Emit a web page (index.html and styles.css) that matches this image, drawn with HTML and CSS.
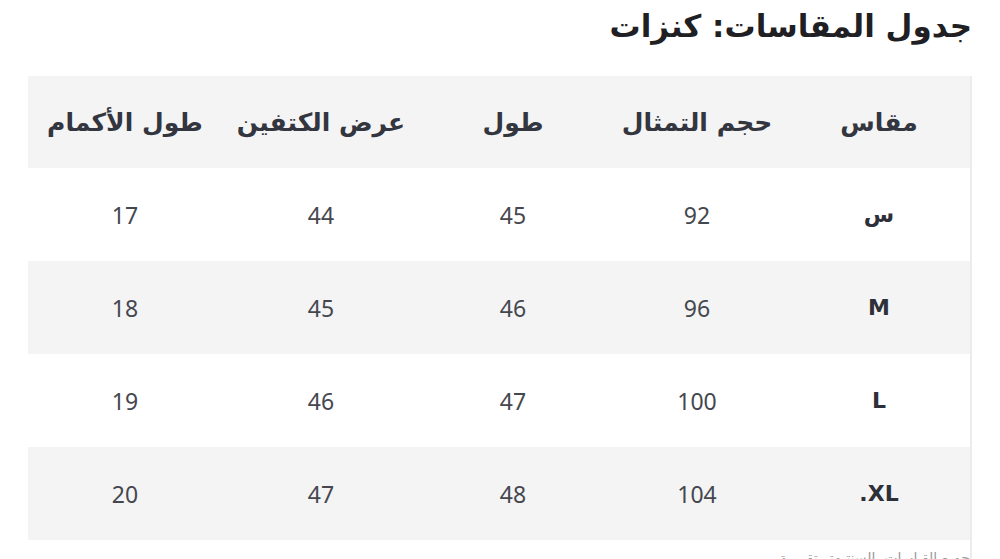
FILE: index.html
```html
<!DOCTYPE html>
<html lang="ar" dir="rtl">
<head>
<meta charset="utf-8">
<title>جدول المقاسات: كنزات</title>
<link rel="stylesheet" href="styles.css">
</head>
<body>
<div class="page">
  <h1 class="title">جدول المقاسات: كنزات</h1>
  <div class="table-wrap">
    <table class="sizes">
      <colgroup>
        <col class="c1"><col class="c2"><col class="c3"><col class="c4"><col class="c5">
      </colgroup>
      <thead>
        <tr class="shade">
          <th>مقاس</th>
          <th>حجم التمثال</th>
          <th>طول</th>
          <th>عرض الكتفين</th>
          <th>طول الأكمام</th>
        </tr>
      </thead>
      <tbody>
        <tr>
          <td class="size">س</td><td>92</td><td>45</td><td>44</td><td>17</td>
        </tr>
        <tr class="shade">
          <td class="size">M</td><td>96</td><td>46</td><td>45</td><td>18</td>
        </tr>
        <tr>
          <td class="size">L</td><td>100</td><td>47</td><td>46</td><td>19</td>
        </tr>
        <tr class="shade">
          <td class="size">XL.</td><td>104</td><td>48</td><td>47</td><td>20</td>
        </tr>
      </tbody>
    </table>
    <p class="note">جميع القياسات بالسنتيمتر تقريبية</p>
  </div>
</div>
</body>
</html>
```
FILE: styles.css
```css
html, body {
  margin: 0;
  padding: 0;
  background: #ffffff;
}
body {
  font-family: "Noto Sans", "DejaVu Sans", sans-serif;
  color: #3b3d47;
}
.page {
  padding: 0 28px;
}
.title {
  margin: 0;
  padding-top: 4px;
  height: 72px;
  box-sizing: border-box;
  font-family: "DejaVu Sans", sans-serif;
  font-size: 31px;
  line-height: 44px;
  font-weight: 700;
  color: #1f1f24;
  text-align: right;
}
.table-wrap {
  border-right: 2px solid #ececec;
  margin-top: 4px;
  padding-bottom: 10px;
}
.sizes {
  width: 942px;
  border-collapse: collapse;
  table-layout: fixed;
}
.c1 { width: 182px; }
.c2 { width: 182px; }
.c3 { width: 186px; }
.c4 { width: 198px; }
.c5 { width: 194px; }
.sizes th,
.sizes td {
  padding: 0;
  text-align: center;
  vertical-align: middle;
}
.sizes th {
  height: 92px;
  font-family: "DejaVu Sans", sans-serif;
  font-size: 25px;
  font-weight: 700;
  color: #33353f;
}
.sizes td {
  height: 93px;
  font-size: 23px;
  font-weight: 400;
  color: #45474f;
}
.sizes td.size {
  font-family: "DejaVu Sans", sans-serif;
  font-weight: 700;
  font-size: 22px;
  color: #2e3039;
}
.shade {
  background: #f4f4f5;
}
.note {
  margin: 10px 0 0;
  font-family: "DejaVu Sans", sans-serif;
  font-size: 14px;
  color: #9a9a9a;
}
```
